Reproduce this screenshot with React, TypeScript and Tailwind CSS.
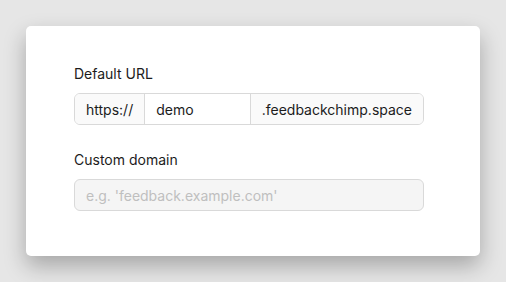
import React from "react";

export default function App() {
  return (
    <div
      className="w-[506px] h-[282px] bg-[#e6e6e6] pt-[26px] pl-[26px]"
      style={{ fontFamily: "Inter, 'Noto Sans', sans-serif" }}
    >
      <div className="w-[454px] h-[230px] bg-white rounded-[5px] shadow-[0_10px_22px_rgba(0,0,0,0.28)] pl-[48px] pt-[38px]">
        <div className="w-[350px] flex flex-col">
          <div className="text-[14px] leading-[20px] text-[#1c1c1c]">Default URL</div>
          <div className="mt-[9px] h-[32px] flex border border-[#d9d9d9] rounded-[6px] overflow-hidden text-[14px] text-[#1c1c1c]">
            <div className="px-[11px] flex items-center bg-[#fafafa] border-r border-[#d9d9d9]">https://</div>
            <div className="flex-1 px-[11px] flex items-center bg-white">demo</div>
            <div className="px-[11px] flex items-center bg-[#fafafa] border-l border-[#d9d9d9]">.feedbackchimp.space</div>
          </div>
          <div className="mt-[25px] text-[14px] leading-[20px] text-[#1c1c1c]">Custom domain</div>
          <div className="mt-[9px] h-[32px] flex items-center px-[11px] border border-[#d9d9d9] rounded-[6px] bg-[#f5f5f5] text-[14px] text-[#bfbfbf]">
            e.g. 'feedback.example.com'
          </div>
        </div>
      </div>
    </div>
  );
}
